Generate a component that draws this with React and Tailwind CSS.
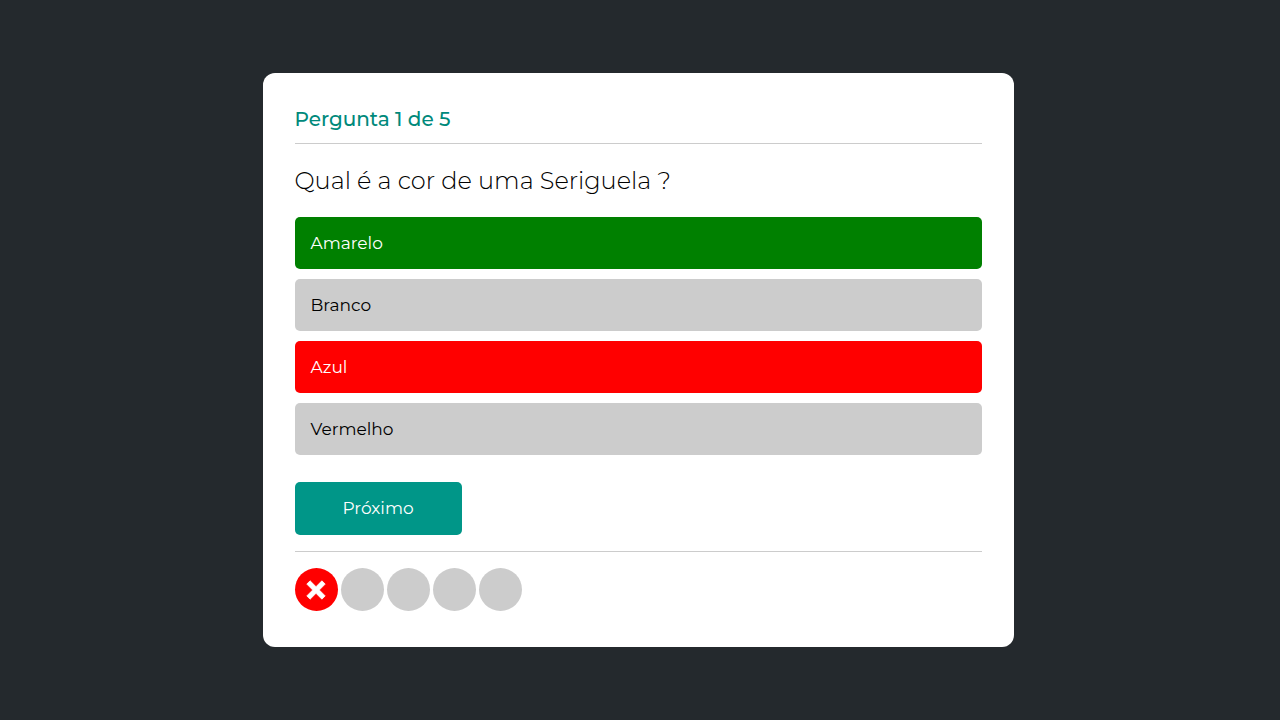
import React from "react";

const answers = [
  { label: "Amarelo", style: "bg-[#008000] text-white" },
  { label: "Branco", style: "bg-[#cccccc] text-black" },
  { label: "Azul", style: "bg-[#ff0000] text-white" },
  { label: "Vermelho", style: "bg-[#cccccc] text-black" },
];

const results = ["wrong", "pending", "pending", "pending", "pending"];

function WrongMark() {
  return (
    <svg viewBox="0 0 20 20" className="size-5" role="img" aria-label="Resposta errada">
      <path d="M4.1 0.8L10 6.7L15.9 0.8L19.2 4.1L13.3 10L19.2 15.9L15.9 19.2L10 13.3L4.1 19.2L0.8 15.9L6.7 10L0.8 4.1Z" fill="white" stroke="white" strokeWidth="0.8" strokeLinejoin="round" />
    </svg>
  );
}

export default function App() {
  return (
    <div className="flex min-h-screen items-center justify-center bg-[#24292d] pr-1 font-['Montserrat','Inter',sans-serif]">
      <main className="w-full max-w-[751px] rounded-xl bg-white px-8 pt-8 pb-9">
        <h2 className="border-b border-[#cccccc] pb-2.5 text-[20px] leading-7 font-medium text-[#00897b]">
          Pergunta 1 de 5
        </h2>
        <h1 className="mt-[21px] text-[24px] leading-8 font-[350] text-black">Qual é a cor de uma Seriguela ?</h1>
        <div className="mt-5 flex flex-col gap-2.5">
          {answers.map((a) => (
            <button
              key={a.label}
              type="button"
              className={`w-full rounded-[5px] px-4 py-3 text-left text-[17px] leading-7 ${a.style}`}
            >
              {a.label}
            </button>
          ))}
        </div>
        <button
          type="button"
          className="mt-[27px] rounded-[5px] bg-[#009688] px-12 py-[13px] text-[17px] leading-[27px] text-white"
        >
          Próximo
        </button>
        <div className="mt-4 flex gap-[3px] border-t border-[#cccccc] pt-4">
          {results.map((r, i) => (
            <span
              key={i}
              className={`flex size-[43px] items-center justify-center rounded-full ${
                r === "wrong" ? "bg-[#ff0000]" : "bg-[#cccccc]"
              }`}
            >
              {r === "wrong" && <WrongMark />}
            </span>
          ))}
        </div>
      </main>
    </div>
  );
}
